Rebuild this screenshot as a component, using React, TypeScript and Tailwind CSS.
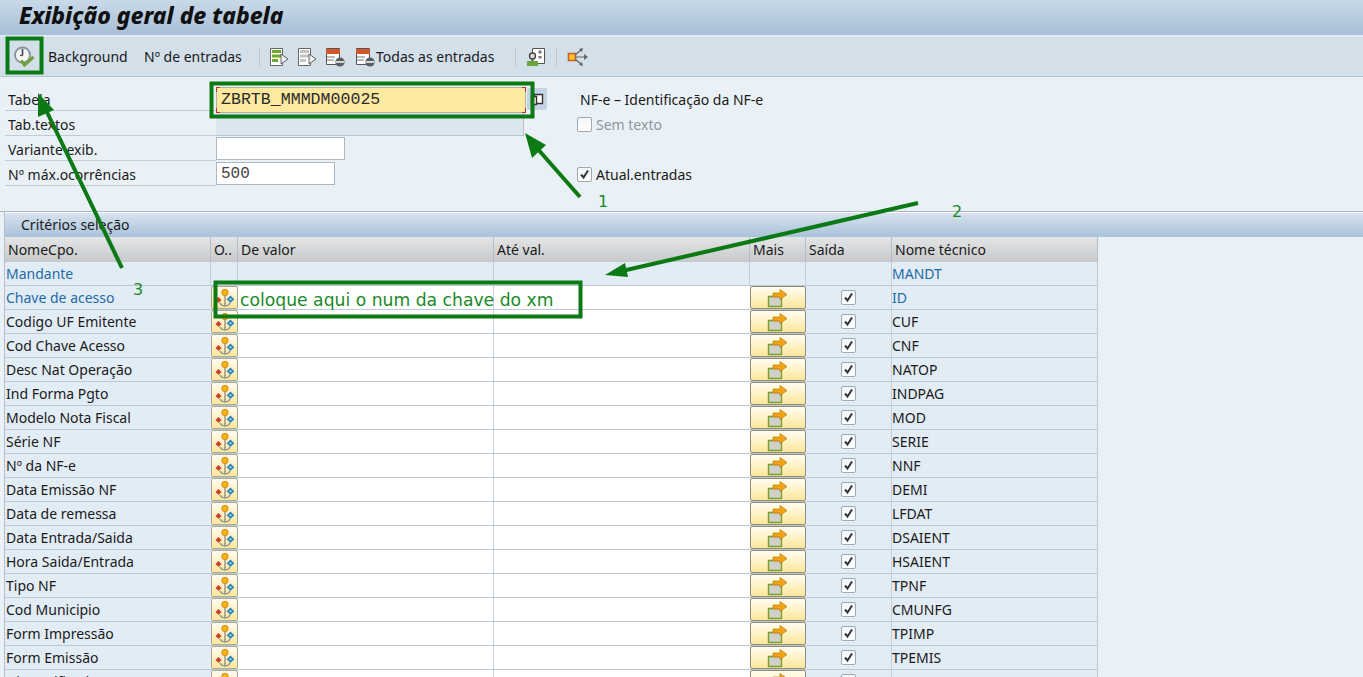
import React from 'react';

const SANS = "font-['Noto_Sans',sans-serif]";
const COLS = 'grid-cols-[206px_27px_256px_256px_56px_86px_206px]';

const rows: [string, string, boolean?][] = [
  ['Chave de acesso', 'ID', true],
  ['Codigo UF Emitente', 'CUF'],
  ['Cod Chave Acesso', 'CNF'],
  ['Desc Nat Operação', 'NATOP'],
  ['Ind Forma Pgto', 'INDPAG'],
  ['Modelo Nota Fiscal', 'MOD'],
  ['Série NF', 'SERIE'],
  ['Nº da NF-e', 'NNF'],
  ['Data Emissão NF', 'DEMI'],
  ['Data de remessa', 'LFDAT'],
  ['Data Entrada/Saida', 'DSAIENT'],
  ['Hora Saida/Entrada', 'HSAIENT'],
  ['Tipo NF', 'TPNF'],
  ['Cod Municipio', 'CMUNFG'],
  ['Form Impressão', 'TPIMP'],
  ['Form Emissão', 'TPEMIS'],
  ['Dig Verificador', 'CDV'],
];

const ClockCheck = () => (
  <svg width="24" height="24" viewBox="0 0 24 24">
    <circle cx="10.5" cy="10" r="7.5" fill="#f5f5f5" stroke="#8a929a" strokeWidth="1.8" />
    <path d="M10.5 4v6.5" stroke="#444" strokeWidth="1.6" />
    <path d="M10.5 10.5h-2.5" stroke="#444" strokeWidth="1.2" />
    <path d="M9 15.5l3.5 4.5 9-8" fill="none" stroke="#6da33a" strokeWidth="3.2" />
  </svg>
);

const SelectPage = ({ color }: { color: string }) => (
  <svg width="20" height="20" viewBox="0 0 20 20">
    <path d="M1.5 1.5h12v17h-12z" fill="#fff" stroke="#666" />
    <path d="M3 3h9v3H3zM3 7.5h9v3H3zM3 12h6v3H3z" fill={color} />
    <path d="M12 7l7 5-7 5z" fill="#eee" stroke="#666" />
  </svg>
);

const FilterPage = () => (
  <svg width="22" height="20" viewBox="0 0 22 20">
    <path d="M1.5 1.5h13v16h-13z" fill="#fff" stroke="#555" />
    <path d="M1 2h14v5H1z" fill="#d2542a" />
    <path d="M2 10h8M2 13h7" stroke="#777" />
    <circle cx="15" cy="15" r="4.6" fill="#5a5f66" />
    <path d="M11 15h8" stroke="#fff" strokeWidth="1.5" />
  </svg>
);

const UserSettings = () => (
  <svg width="20" height="20" viewBox="0 0 20 20">
    <path d="M6.5 1.5h12v15h-12z" fill="#fff" stroke="#555" />
    <path d="M12 5h4M14 3v4M12 10h4M14 9v3" stroke="#555" />
    <circle cx="6.5" cy="9" r="3" fill="#ddd" stroke="#444" strokeWidth="1.4" />
    <path d="M5.5 12v2h2v-2" fill="#555" />
    <path d="M1 14h11v5H1z" fill="#6aa63a" />
  </svg>
);

const Export = () => (
  <svg width="22" height="20" viewBox="0 0 22 20">
    <path d="M1.5 6.5h7v7h-7z" fill="#fbc02d" stroke="#c9622a" strokeWidth="1.6" />
    <path d="M8 10h11M8 8l6-5M8 12l6 5" stroke="#666" strokeWidth="1.2" fill="none" />
    <path d="M17 7l4 3-4 3zM12 2l4-1-1 4zM12 18l4 1-1-4z" fill="#666" />
  </svg>
);

const Multi = () => (
  <svg width="20" height="20" viewBox="0 0 20 20">
    <path d="M10 8v10M5 15c1 2 3 3 5 3s4-1 5-3" fill="none" stroke="#7d8288" strokeWidth="1.2" />
    <circle cx="10" cy="4.5" r="3.2" fill="#f6b21c" stroke="#d98c10" />
    <path d="M3.5 9l3 3-3 3-3-3z" fill="#c8402a" />
    <path d="M15.5 7.5l3.8 3.8-3.8 3.8-3.8-3.8z" fill="#2a86b8" />
    <circle cx="15.5" cy="11.3" r="1" fill="#bfe3f2" />
  </svg>
);

const MoreArrow = () => (
  <svg width="22" height="20" viewBox="0 0 22 20">
    <path d="M1.5 8.5h13v10h-13z" fill="#d0d0c8" stroke="#78a02a" strokeWidth="1.4" />
    <path d="M6 5h7V1.5L20 6.5l-7 5V9H6z" fill="#f0a414" stroke="#b87c10" strokeWidth=".7" />
  </svg>
);

const Check = ({ disabled = false }: { disabled?: boolean }) => (
  <span className="flex h-[15px] w-[15px] items-center justify-center rounded-[2px] border border-[#a0a8b0] bg-gradient-to-b from-[#f4f5f6] to-white">
    {!disabled && (
      <svg width="11" height="11" viewBox="0 0 11 11">
        <path d="M2 5.5l2.5 3L9 1.5" fill="none" stroke="#2f3544" strokeWidth="2" />
      </svg>
    )}
  </span>
);

const FormRow = ({ label, children }: { label: string; children: React.ReactNode }) => (
  <div className="flex h-[25px] items-center">
    <div className="flex h-full w-[211px] items-center border-b border-[#c3ccd4] pl-[3px] pt-[4px]">{label}</div>
    {children}
  </div>
);

const HeaderCell = ({ children }: { children: React.ReactNode }) => (
  <div className="flex items-center border-r border-[#b4bdc5] pl-[3px] pt-[1px]">{children}</div>
);

const Corner = ({ className }: { className: string }) => (
  <span className={`absolute h-[5px] w-[4px] border-[#c0303a] ${className}`} />
);

const App = () => (
  <div className={`relative h-[677px] w-[1363px] overflow-hidden bg-[#eaf1f6] text-[14px] leading-none text-[#1a1a1a] ${SANS}`}>
    <div className="flex h-[37px] items-center border-b-2 border-[#e3ebf2] bg-gradient-to-b from-[#c9d9e8] to-[#a8bfd8] pb-[2px] pl-[19px]">
      <h1 className="font-['Noto_Sans',sans-serif] text-[22.9px] font-extrabold italic text-[#101010]">
        Exibição geral de tabela
      </h1>
    </div>

    <div className="flex h-[40px] items-center border-b border-[#b8c4cf] bg-[#d3dfe9]">
      <div className="ml-[12px] flex w-[36px] items-center"><ClockCheck /></div>
      <span className="w-[96px]">Background</span>
      <span className="w-[115px]">Nº de entradas</span>
      <span className="mr-[9px] h-[18px] w-px bg-[#b6c6d4]" />
      <div className="flex items-center gap-[8px]">
        <SelectPage color="#6fa82e" />
        <SelectPage color="#c4c4c4" />
        <FilterPage />
        <FilterPage />
      </div>
      <span className="ml-[-1px] w-[139px]">Todas as entradas</span>
      <span className="mr-[10px] h-[18px] w-px bg-[#b6c6d4]" />
      <UserSettings />
      <span className="mx-[10px] h-[18px] w-px bg-[#b6c6d4]" />
      <Export />
    </div>

    <div className="relative h-[134px] pl-[5px] pt-[9px]">
      <FormRow label="Tabela">
        <div className="relative z-10 mt-[1px] flex h-[26px] w-[310px] items-center self-start border border-[#b5b19a] bg-[#fde99f] pl-[4px] font-['Liberation_Mono',monospace] text-[16.6px] text-[#2c2c2c]">
          ZBRTB_MMMDM00025
          <Corner className="left-[-1px] top-[-1px] border-l border-t" />
          <Corner className="bottom-[-1px] left-[-1px] border-b border-l" />
          <Corner className="right-[-1px] top-[-1px] border-r border-t" />
          <Corner className="bottom-[-1px] right-[-1px] border-b border-r" />
        </div>
        <div className="ml-[1px] flex h-[22px] w-[20px] items-center justify-center rounded-[2px] bg-[#c5d4e3]">
          <svg width="14" height="14" viewBox="0 0 14 14">
            <path d="M4.5 2.5h8v9h-8z" fill="#fff" stroke="#333" strokeWidth="1.4" />
            <path d="M1.5 4.5h5v8h-5z" fill="#fff" stroke="#333" strokeWidth="1.4" />
          </svg>
        </div>
        <span className="ml-[33px] pt-[3px]">NF-e – Identificação da NF-e</span>
      </FormRow>
      <FormRow label="Tab.textos">
        <div className="h-[25px] w-[308px] border-b border-r border-[#b8c2cb] bg-[#dbe6ee]" />
        <div className="ml-[53px] mt-[2px] flex items-center gap-[4px] text-[#8d979f]">
          <Check disabled />
          Sem texto
        </div>
      </FormRow>
      <FormRow label="Variante exib.">
        <div className="h-[23px] w-[129px] border border-[#aeb8c1] bg-white" />
      </FormRow>
      <FormRow label="Nº máx.ocorrências">
        <div className="flex h-[23px] w-[119px] items-center border border-[#aeb8c1] bg-white pl-[4px] pt-[1px] font-['Liberation_Mono',monospace] text-[16px] text-[#444]">
          500
        </div>
        <div className="ml-[242px] mt-[2px] flex items-center gap-[4px]">
          <Check />
          Atual.entradas
        </div>
      </FormRow>
    </div>

    <div className="border-t border-[#a9b6c2]">
      <div className="ml-[4px] border-l border-[#b4c0cb]">
        <div className="flex h-[25px] items-center border-t border-white bg-gradient-to-b from-[#d8e3ee] to-[#a9c2da] pl-[16px]">
          Critérios seleção
        </div>
        <div className={`grid h-[25px] w-[1093px] ${COLS} bg-gradient-to-b from-[#e4e5e6] to-[#c6c9cc]`}>
          <HeaderCell>NomeCpo.</HeaderCell>
          <HeaderCell>O..</HeaderCell>
          <HeaderCell>De valor</HeaderCell>
          <HeaderCell>Até val.</HeaderCell>
          <HeaderCell>Mais</HeaderCell>
          <HeaderCell>Saída</HeaderCell>
          <HeaderCell>Nome técnico</HeaderCell>
        </div>
        <div className={`grid h-[24px] w-[1093px] ${COLS} border-b border-[#bcc9d5] bg-[#e2ecf5] text-[#1f6aa8]`}>
          <div className="flex items-center border-r border-[#c3ced8] pl-[1px]">Mandante</div>
          <div className="border-r border-[#c3ced8]" />
          <div className="border-r border-[#c3ced8]" />
          <div className="border-r border-[#c3ced8]" />
          <div className="border-r border-[#c3ced8]" />
          <div className="border-r border-[#c3ced8]" />
          <div className="flex items-center border-r border-[#bcc9d5]">MANDT</div>
        </div>
        {rows.map(([name, tech, key]) => (
          <div
            key={tech}
            className={`grid h-[24px] w-[1093px] ${COLS} border-b border-[#bcc9d5] bg-[#e2ecf5]`}
          >
            <div className={`flex items-center pl-[1px] ${key ? 'text-[#1f6aa8]' : ''}`}>{name}</div>
            <div className="flex items-center justify-center rounded-[2px] border border-[#a9a58e] bg-gradient-to-b from-[#fffaf0] to-[#fde79a]">
              <Multi />
            </div>
            <div className="border-r border-[#c9d2da] bg-white" />
            <div className="bg-white" />
            <div className="flex items-center justify-center rounded-[2px] border border-[#8f8c78] bg-gradient-to-b from-[#fffdf0] to-[#fde79a]">
              <MoreArrow />
            </div>
            <div className="flex items-center justify-center border-r border-[#c3ced8]">
              <Check />
            </div>
            <div className={`flex items-center border-r border-[#bcc9d5] ${key ? 'text-[#1f6aa8]' : ''}`}>{tech}</div>
          </div>
        ))}
      </div>
    </div>

    {/* green annotations drawn over the screenshot */}
    <svg className="pointer-events-none absolute left-0 top-0 z-20" width="1363" height="677">
      <g fill="none" stroke="#0b7a14" strokeWidth="4">
        <rect x="7.5" y="38.5" width="34" height="34" />
        <rect x="211.5" y="83.5" width="321" height="33" />
        <rect x="215.5" y="282.5" width="365" height="34" />
        <path d="M580 197L536 147M918 203L622 271M122 268L46 110" />
      </g>
      <g fill="#0b7a14">
        <path d="M525 133L546 145L532 158z" />
        <path d="M605 275L625 263L628 277z" />
        <path d="M38 93L54 110L38 117z" />
      </g>
    </svg>
    <div className="absolute left-[240px] top-[292px] z-20 font-['DejaVu_Sans',sans-serif] text-[17.2px] text-[#1a8a28]">
      coloque aqui o num da chave do xm
    </div>
    <div className="absolute left-[598px] top-[194px] z-20 font-['DejaVu_Sans',sans-serif] text-[16px] text-[#1a8a28]">1</div>
    <div className="absolute left-[952px] top-[204px] z-20 font-['DejaVu_Sans',sans-serif] text-[16px] text-[#1a8a28]">2</div>
    <div className="absolute left-[133px] top-[282px] z-20 font-['DejaVu_Sans',sans-serif] text-[16px] text-[#1a8a28]">3</div>
  </div>
);

export default App;
